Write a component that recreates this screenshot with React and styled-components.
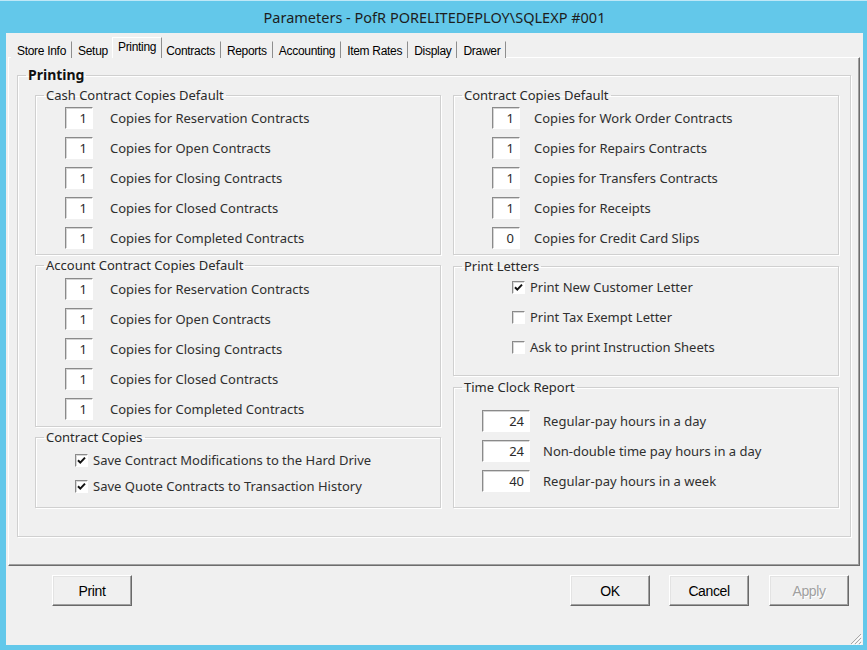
import React from "react";
import styled, { createGlobalStyle } from "styled-components";

const GlobalStyle = createGlobalStyle`
  html, body {
    margin: 0;
    padding: 0;
    background: #ffffff;
  }
  body {
    font-family: "Noto Sans", "Open Sans", sans-serif;
  }
`;

const tabs = ["Store Info", "Setup", "Printing", "Contracts", "Reports", "Accounting", "Item Rates", "Display", "Drawer"];

const cashRows = [
  "Copies for Reservation Contracts",
  "Copies for Open Contracts",
  "Copies for Closing Contracts",
  "Copies for Closed Contracts",
  "Copies for Completed Contracts",
];

const contractDefaults = [
  { value: 1, label: "Copies for Work Order Contracts" },
  { value: 1, label: "Copies for Repairs Contracts" },
  { value: 1, label: "Copies for Transfers Contracts" },
  { value: 1, label: "Copies for Receipts" },
  { value: 0, label: "Copies for Credit Card Slips" },
];

const letters = [
  { checked: true, label: "Print New Customer Letter" },
  { checked: false, label: "Print Tax Exempt Letter" },
  { checked: false, label: "Ask to print Instruction Sheets" },
];

const timeClock = [
  { value: 24, label: "Regular-pay hours in a day" },
  { value: 24, label: "Non-double time pay hours in a day" },
  { value: 40, label: "Regular-pay hours in a week" },
];

const Checkbox = ({ checked }) => (
  <CheckBox>
    {checked && (
      <svg width="11" height="11" viewBox="0 0 11 11">
        <path d="M2 5.2 L4.3 7.6 L9 2.6" fill="none" stroke="#111" strokeWidth="2" />
      </svg>
    )}
  </CheckBox>
);

const NumberRow = ({ value, label, indent, width, gap }) => (
  <Row $h={30} $indent={indent} $gap={gap}>
    <NumBox $w={width}>{value}</NumBox>
    <Label>{label}</Label>
  </Row>
);

const CheckRow = ({ checked, label, indent, h }) => (
  <Row $h={h} $indent={indent} $gap={5}>
    <Checkbox checked={checked} />
    <Label>{label}</Label>
  </Row>
);

export default function App() {
  return (
    <>
      <GlobalStyle />
      <Window>
        <TitleBar>Parameters - PofR PORELITEDEPLOY\SQLEXP #001</TitleBar>
        <Body>
          <TabStrip>
            {tabs.map((t) => (
              <Tab key={t} $active={t === "Printing"}>{t}</Tab>
            ))}
          </TabStrip>
          <Pane>
            <Group $outer>
              <Legend $bold>Printing</Legend>
              <Columns>
                <Column>
                  <Group>
                    <Legend>Cash Contract Copies Default</Legend>
                    <GroupBody $pt={0} $pb={1}>
                      {cashRows.map((r) => (
                        <NumberRow key={r} value={1} label={r} indent={29} width={28} gap={17} />
                      ))}
                    </GroupBody>
                  </Group>
                  <Group>
                    <Legend>Account Contract Copies Default</Legend>
                    <GroupBody $pt={1} $pb={2}>
                      {cashRows.map((r) => (
                        <NumberRow key={r} value={1} label={r} indent={29} width={28} gap={17} />
                      ))}
                    </GroupBody>
                  </Group>
                  <Group>
                    <Legend>Contract Copies</Legend>
                    <GroupBody $pt={2} $pb={8}>
                      <CheckRow checked label="Save Contract Modifications to the Hard Drive" indent={39} h={26} />
                      <CheckRow checked label="Save Quote Contracts to Transaction History" indent={39} h={26} />
                    </GroupBody>
                  </Group>
                </Column>
                <Column $spread>
                  <Group>
                    <Legend>Contract Copies Default</Legend>
                    <GroupBody $pt={0} $pb={1}>
                      {contractDefaults.map((r) => (
                        <NumberRow key={r.label} value={r.value} label={r.label} indent={38} width={28} gap={14} />
                      ))}
                    </GroupBody>
                  </Group>
                  <Group>
                    <Legend>Print Letters</Legend>
                    <GroupBody $pt={0} $pb={13} $shift={-2}>
                      {letters.map((r) => (
                        <CheckRow key={r.label} checked={r.checked} label={r.label} indent={58} h={30} />
                      ))}
                    </GroupBody>
                  </Group>
                  <Group>
                    <Legend>Time Clock Report</Legend>
                    <GroupBody $pt={11} $pb={11}>
                      {timeClock.map((r) => (
                        <NumberRow key={r.label} value={r.value} label={r.label} indent={28} width={48} gap={13} />
                      ))}
                    </GroupBody>
                  </Group>
                </Column>
              </Columns>
            </Group>
          </Pane>
          <ButtonBar>
            <Button>Print</Button>
            <Spacer />
            <Button $tight>OK</Button>
            <Button>Cancel</Button>
            <Button $disabled>Apply</Button>
          </ButtonBar>
          <Grip viewBox="0 0 14 14" width="14" height="14">
            <path d="M13 3 L3 13 M13 7 L7 13 M13 11 L11 13" stroke="#a8a8a8" strokeWidth="1" />
            <path d="M14 4 L4 14 M14 8 L8 14 M14 12 L12 14" stroke="#ffffff" strokeWidth="1" />
          </Grip>
        </Body>
      </Window>
    </>
  );
}

const Window = styled.div`
  width: 867px;
  height: 650px;
  box-sizing: border-box;
  background: #63c8ea;
  border-top: 1px solid #bfe8f7;
  padding: 0 4px 5px 6px;
  display: flex;
  flex-direction: column;
`;

const TitleBar = styled.div`
  height: 32px;
  flex: none;
  display: flex;
  align-items: center;
  justify-content: center;
  font-size: 14.5px;
  color: #1d1d1d;
`;

const Body = styled.div`
  flex: 1;
  position: relative;
  background: #f0f0f0;
  display: flex;
  flex-direction: column;
  padding: 4px 3px 0 2px;
`;

const TabStrip = styled.div`
  height: 21px;
  display: flex;
  align-items: flex-end;
  padding-left: 3px;
  margin-bottom: -1px;
  position: relative;
  z-index: 1;
`;

const Tab = styled.div`
  height: ${(p) => (p.$active ? 21 : 17)}px;
  box-sizing: border-box;
  margin: ${(p) => (p.$active ? "0 -2px 0 -2px" : "0")};
  padding: ${(p) => (p.$active ? "0 5px 2px" : "1px 5px 0")};
  display: flex;
  align-items: center;
  background: #f0f0f0;
  border-left: 1px solid ${(p) => (p.$active ? "#ffffff" : "transparent")};
  border-top: 1px solid ${(p) => (p.$active ? "#ffffff" : "transparent")};
  border-right: 1px solid #8e8e8e;
  font-family: "Liberation Sans", Arial, sans-serif;
  font-size: 12px;
  letter-spacing: -0.3px;
  color: #000;
  position: relative;
  z-index: ${(p) => (p.$active ? 2 : 1)};
`;

const Pane = styled.div`
  height: 509px;
  box-sizing: border-box;
  border: 1px solid;
  border-color: #ffffff #6d6d6d #6d6d6d #ffffff;
  box-shadow: inset -1px -1px 0 #a0a0a0;
  padding: 8px 8px 0 8px;
`;

const Group = styled.fieldset`
  margin: 0;
  min-width: 0;
  padding: ${(p) => (p.$outer ? "3px 11px 28px 17px" : "0")};
  border: 1px solid #d0d0d0;
  box-shadow: inset 1px 1px 0 #ffffff, 1px 1px 0 #ffffff;
`;

const Legend = styled.legend`
  margin-left: ${(p) => (p.$bold ? -9 : 8)}px;
  padding: 0 2px;
  font-size: ${(p) => (p.$bold ? 14 : 13)}px;
  font-weight: ${(p) => (p.$bold ? 700 : 400)};
  line-height: ${(p) => (p.$bold ? 18 : 16)}px;
  color: ${(p) => (p.$bold ? "#111" : "#2a2a2a")};
`;

const Columns = styled.div`
  display: grid;
  grid-template-columns: 406px 1fr;
  column-gap: 12px;
`;

const Column = styled.div`
  display: flex;
  flex-direction: column;
  gap: 2px;
  justify-content: ${(p) => (p.$spread ? "space-between" : "flex-start")};
`;

const GroupBody = styled.div`
  margin-top: ${(p) => p.$shift || 0}px;
  padding-top: ${(p) => p.$pt}px;
  padding-bottom: ${(p) => p.$pb}px;
`;

const Row = styled.div`
  height: ${(p) => p.$h}px;
  display: flex;
  align-items: center;
  padding-left: ${(p) => p.$indent}px;
  gap: ${(p) => p.$gap}px;
`;

const NumBox = styled.div`
  width: ${(p) => p.$w}px;
  height: 22px;
  box-sizing: border-box;
  flex: none;
  background: #ffffff;
  border: 1px solid;
  border-color: #8a8a8a #ffffff #ffffff #8a8a8a;
  box-shadow: inset 1px 1px 0 #d4d4d4;
  display: flex;
  align-items: center;
  justify-content: flex-end;
  padding-right: 5px;
  font-size: 13px;
  color: #2a2a2a;
`;

const Label = styled.span`
  font-size: 13px;
  color: #2f2f2f;
  white-space: nowrap;
`;

const CheckBox = styled.div`
  width: 13px;
  height: 13px;
  box-sizing: border-box;
  flex: none;
  background: #ffffff;
  border: 1px solid;
  border-color: #8a8a8a #ffffff #ffffff #8a8a8a;
  box-shadow: inset 1px 1px 0 #d8d8d8;
  display: flex;
  align-items: center;
  justify-content: center;
`;

const ButtonBar = styled.div`
  display: flex;
  align-items: center;
  gap: 20px;
  margin-top: 9px;
  padding: 0 11px 0 44px;
`;

const Spacer = styled.div`
  flex: 1;
`;

const Button = styled.div`
  width: 80px;
  height: 31px;
  box-sizing: border-box;
  margin-right: ${(p) => (p.$tight ? -1 : 0)}px;
  background: #f0f0f0;
  border: 1px solid;
  border-color: #ffffff #696969 #696969 #ffffff;
  box-shadow: inset -1px -1px 0 #a0a0a0, inset 1px 1px 0 #e3e3e3;
  display: flex;
  align-items: center;
  justify-content: center;
  font-family: "Liberation Sans", Arial, sans-serif;
  font-size: 14px;
  letter-spacing: -0.4px;
  color: ${(p) => (p.$disabled ? "#a0a0a0" : "#000")};
  text-shadow: ${(p) => (p.$disabled ? "1px 1px 0 #ffffff" : "none")};
`;

const Grip = styled.svg`
  position: absolute;
  right: 1px;
  bottom: 0;
`;
